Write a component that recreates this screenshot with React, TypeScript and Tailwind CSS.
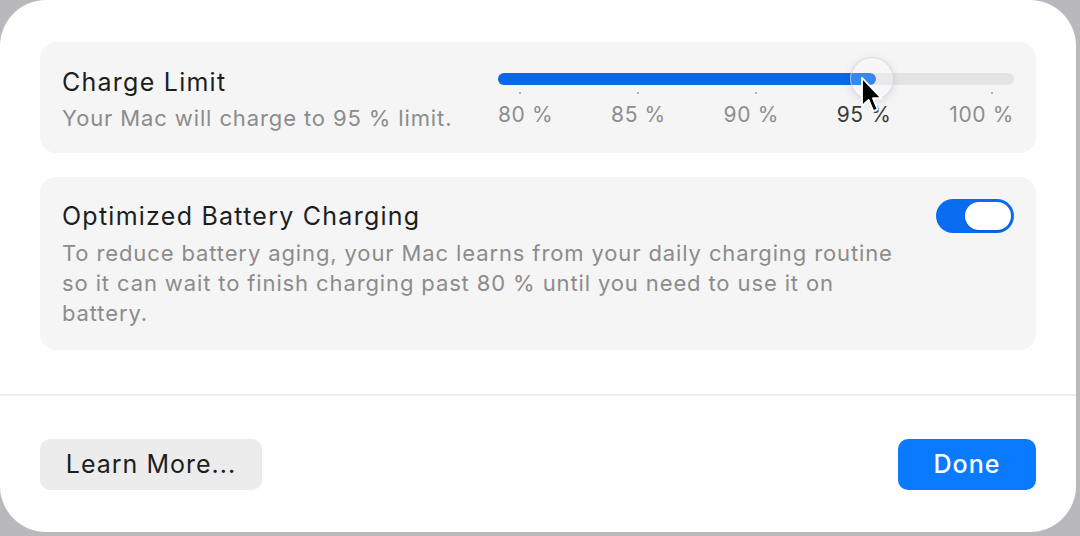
const marks = ["80 %", "85 %", "90 %", "95 %", "100 %"];
const level = 73.3;

function ChargeSlider() {
  return (
    <div className="relative w-[516px]">
      <div className="flex h-[24px] items-center">
        <div className="relative h-[12px] w-full rounded-full bg-[#e4e4e4]">
          <div
            className="h-full rounded-full bg-[#0a68e6]"
            style={{ width: `${level}%` }}
          />
        </div>
      </div>
      <div className="flex h-[4px] items-center justify-between px-[21px]">
        {marks.map((m) => (
          <span key={m} className="h-[2px] w-[2px] rounded-full bg-[#9a9a9a]" />
        ))}
      </div>
      <div className="mt-[8px] flex justify-between text-[21px] leading-[24px] tracking-[0.03em] text-[#8e8e8e]">
        {marks.map((m) => (
          <span key={m} className={m === "95 %" ? "text-[#3a3a3a]" : ""}>
            {m}
          </span>
        ))}
      </div>

      {/* knob being dragged */}
      <div
        className="absolute top-[-10px] h-[44px] w-[44px] -translate-x-1/2 rounded-full border border-[#c9d3e6]/80 bg-white/20 shadow-[0_2px_10px_rgba(0,0,0,0.10)]"
        style={{ left: `${level - 0.8}%` }}
      />

      {/* pointer */}
      <svg
        className="absolute left-[362px] top-[9px]"
        width="24"
        height="38"
        viewBox="0 0 13 21"
      >
        <path
          d="M1 1 L1 16.5 L4.6 13.2 L7.2 19.4 L9.6 18.4 L7 12.3 L11.8 12.3 Z"
          fill="#000"
          stroke="#fff"
          strokeWidth="1"
          strokeLinejoin="round"
        />
      </svg>
    </div>
  );
}

export default function App() {
  return (
    <div className="h-[536px] w-[1080px] overflow-hidden bg-[#b9b9bd] font-['Inter',sans-serif]">
      <div className="h-[532px] w-[1076px] rounded-[46px] bg-white">
        <div className="flex flex-col gap-[24px] px-[40px] pt-[42px]">
          <div className="flex items-start justify-between rounded-[16px] bg-[#f5f5f5] px-[22px] pt-[25px] pb-[20px]">
            <div>
              <h2 className="text-[25px] leading-[30px] tracking-[0.05em] text-[#1e1e1e]">
                Charge Limit
              </h2>
              <p className="mt-[6px] text-[22px] leading-[30px] tracking-[0.04em] text-[#8c8c8c]">
                Your Mac will charge to 95 % limit.
              </p>
            </div>
            <ChargeSlider />
          </div>

          <div className="flex items-start justify-between rounded-[16px] bg-[#f5f5f5] px-[22px] pt-[24px] pb-[22px]">
            <div>
              <h2 className="text-[25px] leading-[30px] tracking-[0.05em] text-[#1e1e1e]">
                Optimized Battery Charging
              </h2>
              <p className="mt-[7px] text-[22px] leading-[30px] tracking-[0.04em] text-[#8c8c8c]">
                To reduce battery aging, your Mac learns from your daily charging routine
                <br />
                so it can wait to finish charging past 80 % until you need to use it on
                <br />
                battery.
              </p>
            </div>
            <div className="mt-[-2px] flex h-[34px] w-[78px] items-center justify-end rounded-full bg-[#0a6cf0] px-[3px]">
              <span className="h-[28px] w-[46px] rounded-full bg-white shadow-[0_1px_2px_rgba(0,0,0,0.2)]" />
            </div>
          </div>
        </div>

        <div className="mt-[44px] h-[2px] w-full bg-[#ececec]" />

        <div className="flex items-center justify-between px-[40px] pt-[43px]">
          <button className="h-[51px] w-[222px] rounded-[10px] bg-[#ececec] text-[25px] tracking-[0.04em] text-[#1e1e1e]">
            Learn More...
          </button>
          <button className="h-[51px] w-[138px] rounded-[10px] bg-[#0a7aff] text-[25px] font-medium tracking-[0.04em] text-white">
            Done
          </button>
        </div>
      </div>
    </div>
  );
}
